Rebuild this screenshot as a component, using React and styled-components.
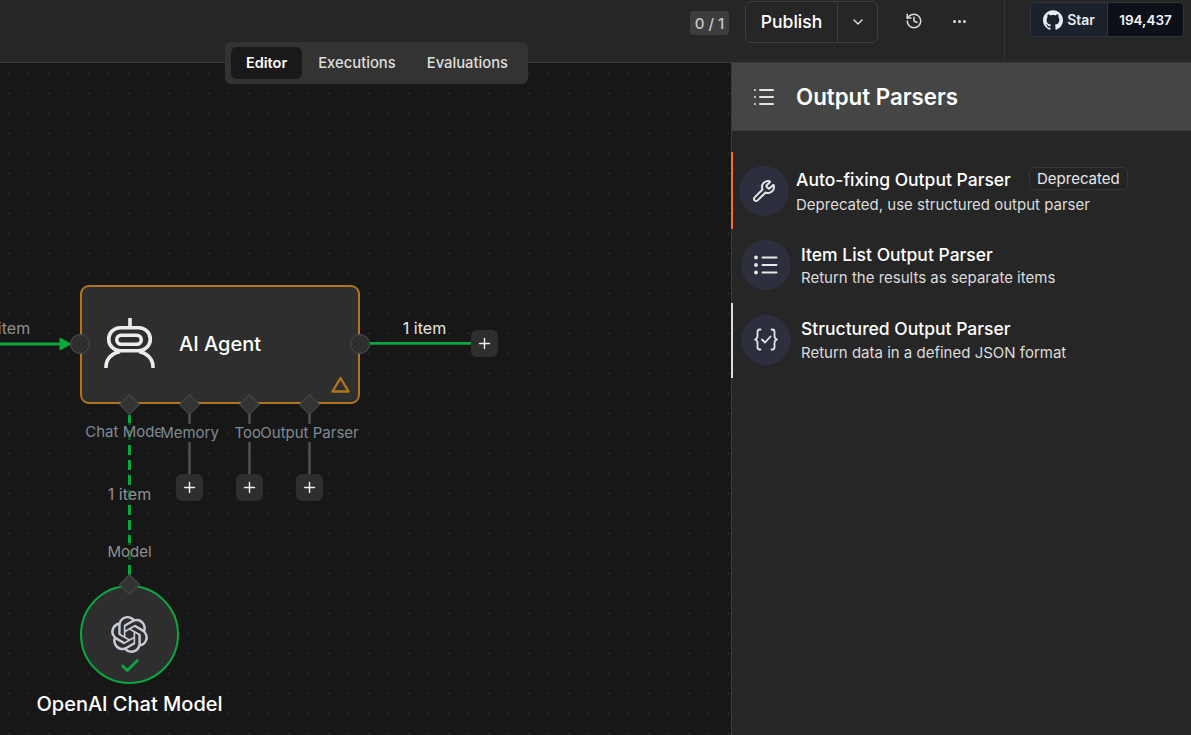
import React from "react";
import styled, { createGlobalStyle } from "styled-components";
import { ChevronDown, History, Ellipsis, Wrench, List, Plus, Check } from "lucide-react";
import { SiGithub, SiOpenai } from "react-icons/si";

const Global = createGlobalStyle`
  html, body { margin: 0; padding: 0; height: 100%; background: #171717; overflow: hidden; }
  body { font-family: Inter, "Liberation Sans", sans-serif; color: #fff; }
  #root { height: 100%; }
`;

const Page = styled.div`
  width: 1191px; height: 735px; display: flex; flex-direction: column; position: relative; overflow: hidden;
`;
const TopBar = styled.header`
  height: 62px; flex: none; background: #262626; border-bottom: 1px solid #3a3a3a;
  display: flex; align-items: flex-start; justify-content: flex-end; padding-right: 7px;
`;
const Counter = styled.div`
  margin-top: 11px; width: 39px; height: 24px; border-radius: 4px; background: #3d3d3d; color: #c8c8c8;
  font-size: 15px; font-weight: 500; display: flex; align-items: center; justify-content: center;
`;
const PublishGroup = styled.div`
  margin: 1px 0 0 16px; width: 133px; height: 42px; box-sizing: border-box; border: 1px solid #3e3e3e; border-radius: 6px;
  display: flex; align-items: stretch;
`;
const PublishLabel = styled.div`
  width: 92px; box-sizing: border-box; padding-bottom: 1px; border-right: 1px solid #3e3e3e; display: flex; align-items: center; justify-content: center;
  font-size: 17.5px; font-weight: 500; color: #fff;
`;
const PublishCaret = styled.div`
  flex: 1; display: flex; align-items: center; justify-content: center; color: #e4e4e4;
`;
const IconButton = styled.div`
  width: 22px; height: 42px; margin: 0 0 0 ${p => p.$gap}px; display: flex; align-items: center; justify-content: center; color: #dcdcdc;
`;
const Divider = styled.div`
  width: 1px; height: 62px; background: #333; margin-left: 34px;
`;
const GitHub = styled.div`
  margin: 2px 0 0 25px; width: 154px; height: 35px; box-sizing: border-box; border: 1px solid #30363d; border-radius: 5px;
  display: flex; overflow: hidden;
`;
const StarPart = styled.div`
  width: 76px; background: #1b222b; border-right: 1px solid #30363d; display: flex; align-items: center; justify-content: center; gap: 4px;
  font-size: 14px; font-weight: 600; color: #e6edf3;
`;
const CountPart = styled.div`
  flex: 1; background: #0d1117; display: flex; align-items: center; justify-content: center;
  font-size: 13.5px; font-weight: 600; color: #f0f6fc;
`;

const Main = styled.main`
  flex: 1; display: flex; min-height: 0;
`;
const Canvas = styled.section`
  width: 731px; flex: none; position: relative; overflow: hidden; background-color: #171717;
  background-image: radial-gradient(circle at 10.5px 10.5px, #484848 0.5px, transparent 0.7px);
  background-size: 20px 20px; background-position: -2px 0;
`;
const Tabs = styled.nav`
  position: absolute; left: 225px; top: 42px; width: 303px; height: 42px; box-sizing: border-box; z-index: 5;
  background: #333; border-radius: 6px; padding: 5px 6px; display: flex; gap: 1px;
`;
const Tab = styled.div`
  height: 32px; padding: 0 15px; border-radius: 6px; display: flex; align-items: center;
  font-size: ${p => (p.$active ? "14.5px" : "14.8px")}; font-weight: ${p => (p.$active ? 600 : 500)}; line-height: 1;
  background: ${p => (p.$active ? "#191919" : "transparent")};
  color: ${p => (p.$active ? "#fff" : "#dedede")};
`;
const Wires = styled.svg`
  position: absolute; left: 0; top: 0; width: 731px; height: 672px;
`;
const AgentNode = styled.div`
  position: absolute; left: 80px; top: 222px; width: 280px; height: 119px; box-sizing: border-box;
  border: 2px solid #b1751f; border-radius: 9px; background: #2e2e2e; display: flex; align-items: center;
`;
const AgentIcon = styled.svg`
  width: 54px; height: 54px; margin: -2px 0 0 21px; flex: none;
`;
const AgentTitle = styled.div`
  margin: 0 0 2px 22px; font-size: 20px; font-weight: 500; color: #fff;
`;
const Warn = styled.svg`
  position: absolute; right: 8px; bottom: 8px; width: 19px; height: 18px;
`;
const Port = styled.div`
  position: absolute; left: ${p => p.$x - 10}px; top: ${p => p.$y - 10}px; width: 20px; height: 20px; box-sizing: border-box;
  border-radius: 50%; background: #2e2e2e; border: 1.5px solid #4f4f4f;
`;
const Diamond = styled.div`
  position: absolute; left: ${p => p.$x - 7.5}px; top: ${p => p.$y - 7.5}px; width: 15px; height: 15px; box-sizing: border-box;
  background: #333; border: 1px solid #4a4a4a; transform: rotate(45deg); z-index: 2;
`;
const PlusButton = styled.div`
  position: absolute; left: ${p => p.$x}px; top: ${p => p.$y}px; width: 27px; height: 27px; border-radius: 6px;
  background: #2e2e2e; color: #eee; display: flex; align-items: center; justify-content: center;
`;
const EdgeLabel = styled.div`
  position: absolute; left: ${p => p.$x}px; top: ${p => p.$y}px; transform: translateX(-50%); white-space: nowrap;
  font-size: ${p => p.$size || 16}px; line-height: 18px; color: ${p => p.$color || "#8f8f8f"}; padding: 0 1px;
  background: ${p => p.$bg || "transparent"};
`;
const PortLabel = styled.div`
  position: absolute; left: ${p => p.$x}px; top: ${p => p.$y}px; transform: translateX(-50%); white-space: nowrap;
  font-size: 15px; line-height: 18px; color: #7f8a94; background: ${p => p.$bg || "#171717"}; z-index: 1;
`;
const ModelNode = styled.div`
  position: absolute; left: 80px; top: 522px; width: 99px; height: 99px; box-sizing: border-box; border-radius: 50%;
  border: 2px solid #0aa741; background: #2e2e2e; display: flex; align-items: center; justify-content: center; color: #c9ccd8;
`;
const ModelCheck = styled.div`
  position: absolute; left: 37px; bottom: 5px; color: #0aa741; display: flex;
`;
const ModelName = styled.div`
  position: absolute; left: 129.5px; top: 628px; transform: translateX(-50%); white-space: nowrap;
  font-size: 20px; font-weight: 500; line-height: 26px; color: #fff;
`;

const Panel = styled.aside`
  flex: 1; background: #262626; border-left: 1px solid #3a3a3a; display: flex; flex-direction: column;
`;
const PanelHeader = styled.div`
  height: 68px; flex: none; box-sizing: border-box; background: #454545; border-bottom: 1px solid #3c3c3c; display: flex; align-items: center; padding-left: 20px; gap: 20px;
  font-size: 22.3px; font-weight: 600; color: #fff;
`;
const PanelList = styled.div`
  padding-top: 21px; display: flex; flex-direction: column;
`;
const Item = styled.div`
  height: ${p => p.$h}px; box-sizing: border-box; display: flex; align-items: center; padding: ${p => p.$pt || 0}px 0 ${p => p.$pb || 0}px ${p => p.$left}px; gap: ${p => p.$gap}px;
  border-left: 2px solid ${p => p.$bar || "transparent"};
  margin-left: -1px;
`;
const IconCircle = styled.div`
  width: 50px; height: 50px; flex: none; border-radius: 50%; background: #2d2e3e; color: #e4e4e4; display: flex; align-items: center; justify-content: center;
`;
const ItemText = styled.div`
  display: flex; flex-direction: column; gap: ${p => p.$gap}px;
`;
const TitleRow = styled.div`
  display: flex; align-items: center; gap: 18px; height: 24px;
`;
const ItemTitle = styled.div`
  font-size: 17.5px; font-weight: 500; line-height: 22px; color: #fff;
`;
const ItemDesc = styled.div`
  font-size: 15px; line-height: 20px; color: #dcdcdc;
`;
const Badge = styled.div`
  height: 23px; width: 99px; box-sizing: border-box; border: 1px solid #363636; border-radius: 5px; display: flex; align-items: center; justify-content: center;
  font-size: 15px; color: #e8e8e8; background: #242424; margin-top: -2px;
`;

const AgentGlyph = () => (
  <AgentIcon viewBox="0 0 54 54" fill="none" stroke="#ececec" strokeWidth="3.600">
    <path d="M27 1v8" />
    <rect x="5.7" y="10.700" width="41.600" height="23" rx="11.500" />
    <rect x="13.700" y="18.200" width="24.600" height="9" rx="4.500" />
    <path d="M3 51v-1C3 42 9 36 17 34.500M50 51v-1C50 42 44 36 36 34.500" />
  </AgentIcon>
);

const BracesCheck = () => (
  <svg width="26" height="23" viewBox="0 0 26 23" fill="none" stroke="#e4e4e4" strokeWidth="1.800" strokeLinecap="round" strokeLinejoin="round">
    <path d="M7.500 1.500H6.500C5 1.500 4.500 2.500 4.500 4v4c0 1.500-.8 3-2.500 3.500 1.700.5 2.500 2 2.500 3.500v4c0 1.500.5 2.500 2 2.500h1" />
    <path d="M18.500 1.500h1c1.500 0 2 1 2 2.500v4c0 1.500.8 3 2.500 3.500-1.700.5-2.500 2-2.500 3.500v4c0 1.500-.5 2.500-2 2.500h-1" />
    <path d="M9 11.500l3 3 5.500-6" />
  </svg>
);

const DotList = () => (
  <svg width="24" height="20" viewBox="0 0 24 20" fill="none" stroke="#e8e8e8" strokeWidth="2" strokeLinecap="round">
    <circle cx="2" cy="2.500" r="1.900" fill="#e8e8e8" stroke="none" />
    <circle cx="2" cy="10" r="1.900" fill="#e8e8e8" stroke="none" />
    <circle cx="2" cy="17.500" r="1.900" fill="#e8e8e8" stroke="none" />
    <path d="M8.500 2.500H22.500M8.500 10H22.500M8.500 17.500H22.500" />
  </svg>
);

export default function App() {
  return (
    <Page>
      <Global />
      <TopBar>
        <Counter>0 / 1</Counter>
        <PublishGroup>
          <PublishLabel>Publish</PublishLabel>
          <PublishCaret><ChevronDown size={16} strokeWidth={2} /></PublishCaret>
        </PublishGroup>
        <IconButton $gap={25}><History size={18} strokeWidth={2} /></IconButton>
        <IconButton $gap={23}><Ellipsis size={17} strokeWidth={2.400} /></IconButton>
        <Divider />
        <GitHub>
          <StarPart><SiGithub size={20} color="#e6edf3" />Star</StarPart>
          <CountPart>194,437</CountPart>
        </GitHub>
      </TopBar>
      <Tabs>
        <Tab $active>Editor</Tab>
        <Tab>Executions</Tab>
        <Tab>Evaluations</Tab>
      </Tabs>
      <Main>
        <Canvas>
          <Wires viewBox="0 0 731 672" fill="none">
            <path d="M0 281H60" stroke="#0aa741" strokeWidth="2.800" />
            <path d="M60 275L71 281L60 287Z" fill="#0aa741" stroke="#0aa741" strokeWidth="1" />
            <path d="M370 280.300H472" stroke="#0aa741" strokeWidth="2.800" />
            <path d="M129.500 352V512" stroke="#0aa741" strokeWidth="3" strokeDasharray="10 5" />
            <path d="M189.500 350V412M249.500 350V412M309.500 350V412" stroke="#505050" strokeWidth="2.500" />
          </Wires>
          <EdgeLabel $x={8.500} $y={256}>1 item</EdgeLabel>
          <EdgeLabel $x={424.500} $y={256} $color="#e6e6e6">1 item</EdgeLabel>
          <AgentNode>
            <AgentGlyph />
            <AgentTitle>AI Agent</AgentTitle>
            <Warn viewBox="0 0 19 18" fill="none" stroke="#b1751f" strokeWidth="2.400" strokeLinejoin="round">
              <path d="M9.500 2L17.500 15.500H1.500Z" />
            </Warn>
          </AgentNode>
          <Port $x={79.700} $y={281} />
          <Port $x={359.700} $y={281} />
          <Diamond $x={129.500} $y={341} />
          <Diamond $x={189.500} $y={341} />
          <Diamond $x={249.500} $y={341} />
          <Diamond $x={309.500} $y={341} />
          <PortLabel $x={126} $y={360} $bg="rgba(23,23,23,0.6)">Chat Model</PortLabel>
          <PortLabel $x={189.500} $y={361}>Memory</PortLabel>
          <PortLabel $x={249.500} $y={361}>Tool</PortLabel>
          <PortLabel $x={309.500} $y={361}>Output Parser</PortLabel>
          <PlusButton $x={176} $y={411}><Plus size={17} strokeWidth={2} /></PlusButton>
          <PlusButton $x={236} $y={411}><Plus size={17} strokeWidth={2} /></PlusButton>
          <PlusButton $x={296} $y={411}><Plus size={17} strokeWidth={2} /></PlusButton>
          <PlusButton $x={471} $y={267}><Plus size={17} strokeWidth={2} /></PlusButton>
          <EdgeLabel $x={129.500} $y={422} $bg="rgba(23,23,23,0.6)">1 item</EdgeLabel>
          <EdgeLabel $x={129.500} $y={480} $size={15} $bg="rgba(23,23,23,0.6)">Model</EdgeLabel>
          <ModelNode>
            <SiOpenai size={37} />
            <ModelCheck><Check size={22} strokeWidth={3} /></ModelCheck>
          </ModelNode>
          <Diamond $x={129.500} $y={521} />
          <ModelName>OpenAI Chat Model</ModelName>
        </Canvas>
        <Panel>
          <PanelHeader>
            <List size={24} strokeWidth={2} color="#e4e4e4" />
            Output Parsers
          </PanelHeader>
          <PanelList>
            <Item $h={77} $left={6} $gap={7} $pt={1} $bar="#ff6d1f">
              <IconCircle><Wrench size={24} strokeWidth={2} /></IconCircle>
              <ItemText $gap={3}>
                <TitleRow>
                  <ItemTitle>Auto-fixing Output Parser</ItemTitle>
                  <Badge>Deprecated</Badge>
                </TitleRow>
                <ItemDesc>Deprecated, use structured output parser</ItemDesc>
              </ItemText>
            </Item>
            <Item $h={74} $left={8} $gap={10} $pb={2}>
              <IconCircle><DotList /></IconCircle>
              <ItemText $gap={1}>
                <TitleRow><ItemTitle>Item List Output Parser</ItemTitle></TitleRow>
                <ItemDesc>Return the results as separate items</ItemDesc>
              </ItemText>
            </Item>
            <Item $h={75} $left={8} $gap={10} $pb={2} $bar="#dcdcdc">
              <IconCircle><BracesCheck /></IconCircle>
              <ItemText $gap={2}>
                <TitleRow><ItemTitle>Structured Output Parser</ItemTitle></TitleRow>
                <ItemDesc>Return data in a defined JSON format</ItemDesc>
              </ItemText>
            </Item>
          </PanelList>
        </Panel>
      </Main>
    </Page>
  );
}
